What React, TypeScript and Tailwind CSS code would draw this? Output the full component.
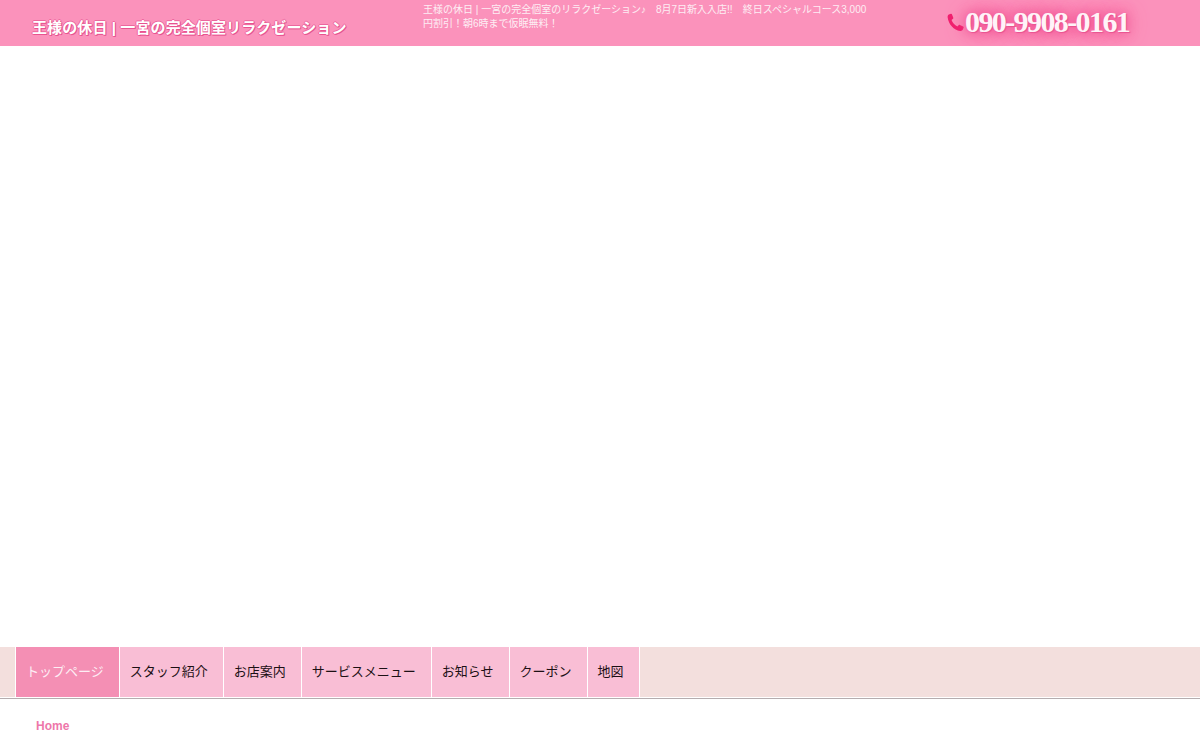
const navItems = [
  { label: 'トップページ', active: true },
  { label: 'スタッフ紹介', active: false },
  { label: 'お店案内', active: false },
  { label: 'サービスメニュー', active: false },
  { label: 'お知らせ', active: false },
  { label: 'クーポン', active: false },
  { label: '地図', active: false },
]

const PhoneIcon = () => (
  <svg viewBox="0 0 24 24" className="w-[19px] h-[19px] shrink-0" fill="#f01f6e">
    <path d="M3.500 2 6.200 1c.6-.2 1.100 0 1.300.6l1.700 4.300c.2.500.1.900-.3 1.300L7 8.700c1.200 3.400 4 6.500 7.400 8.200l1.800-1.700c.4-.4.800-.4 1.300-.2l4.200 2c.6.300.8.800.6 1.300l-1 2.600c-.5 1.300-1.800 2-3.400 1.800C10 21.600 3.300 14.600 2.100 5.600 1.900 4 2.300 2.600 3.500 2Z" />
  </svg>
)

const App = () => {
  return (
    <div className="h-[750px] overflow-hidden bg-white font-['Liberation_Sans','Noto_Sans_CJK_JP',sans-serif]">
      <header className="h-[46px] bg-[#fb92bb] flex overflow-hidden">
        <div className="w-[423px] shrink-0 pl-[32px] pt-[17px]">
          <h1 className="text-[15px] leading-[22px] font-bold tracking-[0.1px] text-white whitespace-nowrap [text-shadow:1px_1px_0_#e8528f,-1px_0_0_#ec679e,0_-1px_0_#ec679e,1px_0_0_#ec679e,0_1px_0_#ec679e]">
            王様の休日 | 一宮の完全個室リラクゼーション
          </h1>
        </div>
        <p className="w-[450px] shrink-0 pt-[3px] text-[10px] leading-[14px] text-[#fdeef4]">
          王様の休日 | 一宮の完全個室のリラクゼーション♪　8月7日新入入店!!　終日スペシャルコース3,000円割引！朝6時まで仮眠無料！
        </p>
        <div className="ml-[73px] mt-[4px] h-[36px] flex items-center">
          <PhoneIcon />
          <span className="text-[30px] leading-[36px] font-bold tracking-[-1.6px] text-[#fff3f8] font-['Liberation_Serif',serif] [text-shadow:1px_1px_1px_#e8528f,0_0_1px_#f27fae,0_0_12px_#f0468c,0_0_20px_#f0468c]">
            090-9908-0161
          </span>
        </div>
      </header>

      <div className="h-[601px] bg-white" />

      <div className="h-[52px] border-b border-[#b5adaf]">
        <nav className="h-[50px] bg-[#f3dfdd] pl-[15px] flex">
          {navItems.map((item) => (
            <a
              key={item.label}
              className={`h-[50px] pl-[10px] pr-[15px] border-l border-white text-[13px] leading-[50px] whitespace-nowrap ${
                item.active ? 'bg-[#f48fb4] text-[#fdeef4]' : 'bg-[#f9bed5] text-[#1c1014]'
              }`}
            >
              {item.label}
            </a>
          ))}
          <div className="h-[50px] border-l border-white" />
        </nav>
      </div>

      <div className="pl-[36px] pt-[20px]">
        <a className="text-[12px] leading-[14px] font-bold text-[#ee77aa] block">Home</a>
      </div>
    </div>
  )
}

export default App
